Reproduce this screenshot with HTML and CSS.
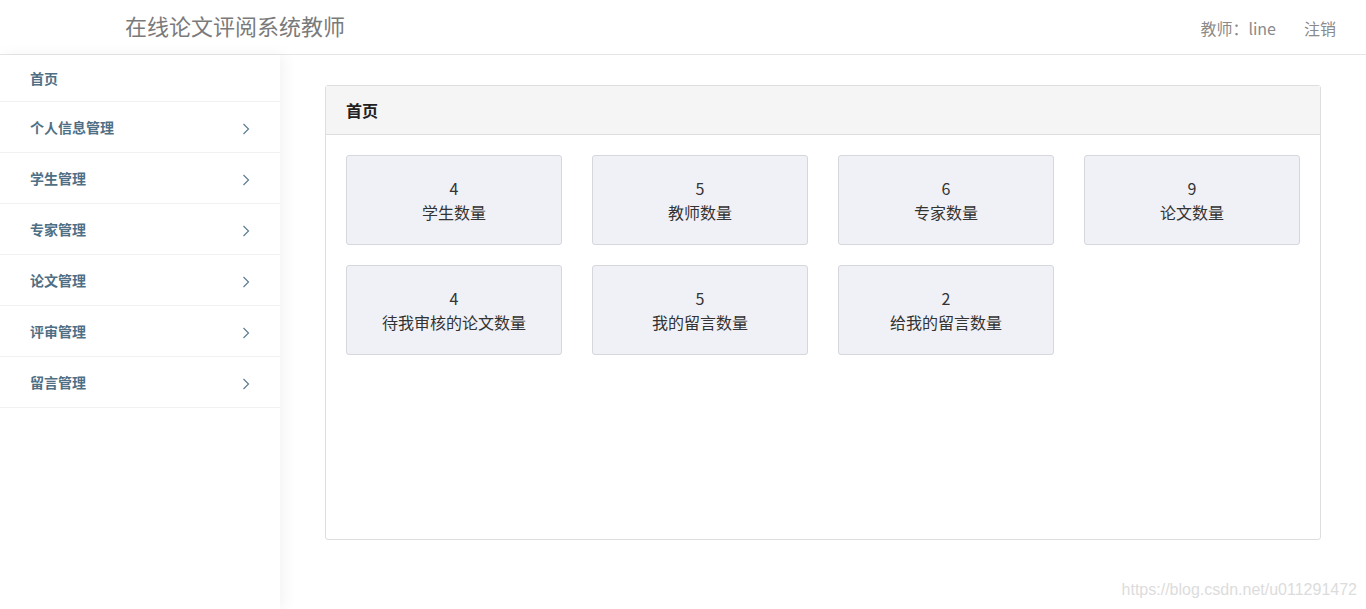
FILE: index.html
```html
<!DOCTYPE html>
<html lang="zh">
<head>
<meta charset="utf-8">
<title>在线论文评阅系统教师</title>
<link rel="stylesheet" href="styles.css">
</head>
<body>
<header class="topbar">
  <div class="brand">在线论文评阅系统教师</div>
  <div class="user">
    <span class="user-name">教师：line</span>
    <a class="logout">注销</a>
  </div>
</header>
<div class="layout">
  <nav class="sidebar">
    <div class="nav-item nav-first">首页</div>
    <div class="nav-item">个人信息管理<svg class="chev" viewBox="0 0 8 12"><path d="M1.5 1 L6.5 6 L1.5 11" /></svg></div>
    <div class="nav-item">学生管理<svg class="chev" viewBox="0 0 8 12"><path d="M1.5 1 L6.5 6 L1.5 11" /></svg></div>
    <div class="nav-item">专家管理<svg class="chev" viewBox="0 0 8 12"><path d="M1.5 1 L6.5 6 L1.5 11" /></svg></div>
    <div class="nav-item">论文管理<svg class="chev" viewBox="0 0 8 12"><path d="M1.5 1 L6.5 6 L1.5 11" /></svg></div>
    <div class="nav-item">评审管理<svg class="chev" viewBox="0 0 8 12"><path d="M1.5 1 L6.5 6 L1.5 11" /></svg></div>
    <div class="nav-item">留言管理<svg class="chev" viewBox="0 0 8 12"><path d="M1.5 1 L6.5 6 L1.5 11" /></svg></div>
  </nav>
  <main class="main">
    <section class="card">
      <div class="card-head">首页</div>
      <div class="card-body">
        <div class="tile"><div>4</div><div>学生数量</div></div>
        <div class="tile"><div>5</div><div>教师数量</div></div>
        <div class="tile"><div>6</div><div>专家数量</div></div>
        <div class="tile"><div>9</div><div>论文数量</div></div>
        <div class="tile"><div>4</div><div>待我审核的论文数量</div></div>
        <div class="tile"><div>5</div><div>我的留言数量</div></div>
        <div class="tile"><div>2</div><div>给我的留言数量</div></div>
      </div>
    </section>
  </main>
</div>
<div class="watermark">https://blog.csdn.net/u011291472</div>
</body>
</html>
```
FILE: styles.css
```css
* { box-sizing: border-box; }
html, body { margin: 0; padding: 0; }
body {
  font-family: "Microsoft YaHei", "Noto Sans CJK SC", "Liberation Sans", sans-serif;
  background: #fff;
  color: #333;
  width: 1366px;
  height: 609px;
  overflow: hidden;
  position: relative;
}
.topbar {
  height: 55px;
  border-bottom: 1px solid #e6e6e6;
  display: flex;
  align-items: center;
  justify-content: space-between;
  padding: 0 30px 0 125px;
}
.brand {
  font-size: 22px;
  color: #7a7a7a;
  margin-top: -4px;
}
.user {
  display: flex;
  gap: 28px;
  font-size: 16px;
  color: #8a8a8a;
  margin-top: 2px;
}
.layout {
  display: flex;
  height: 554px;
}
.sidebar {
  width: 280px;
  flex: none;
  background: #fff;
  box-shadow: 4px 0 14px rgba(0,0,0,0.05);
  position: relative;
  z-index: 1;
}
.nav-item {
  height: 51px;
  border-bottom: 1px solid #f1f1f1;
  display: flex;
  align-items: center;
  justify-content: space-between;
  padding: 0 30px 0 30px;
  font-size: 14px;
  font-weight: bold;
  color: #4f6f84;
}
.nav-first { height: 47px; }
.chev {
  width: 8px;
  height: 12px;
  margin-top: 4px;
  fill: none;
  stroke: #5f7c90;
  stroke-width: 1.2;
}
.main {
  flex: 1;
  padding: 30px 45px 0 45px;
}
.card {
  border: 1px solid #dedede;
  border-radius: 3px;
  height: 455px;
}
.card-head {
  height: 49px;
  background: #f5f5f5;
  border-bottom: 1px solid #dedede;
  display: flex;
  align-items: center;
  padding-left: 20px;
  font-size: 16px;
  font-weight: bold;
  color: #222;
}
.card-body {
  padding: 20px;
  display: grid;
  grid-template-columns: repeat(4, 216px);
  column-gap: 30px;
  row-gap: 20px;
}
.tile {
  height: 90px;
  background: #f0f1f6;
  border: 1px solid #d6d7dc;
  border-radius: 3px;
  display: flex;
  flex-direction: column;
  align-items: center;
  justify-content: center;
  font-size: 16px;
  line-height: 24px;
  color: #333;
}
.watermark {
  position: absolute;
  right: 9px;
  bottom: 10px;
  font-family: "Liberation Sans", Arial, sans-serif;
  font-size: 16px;
  color: #dcdcdc;
}
```
